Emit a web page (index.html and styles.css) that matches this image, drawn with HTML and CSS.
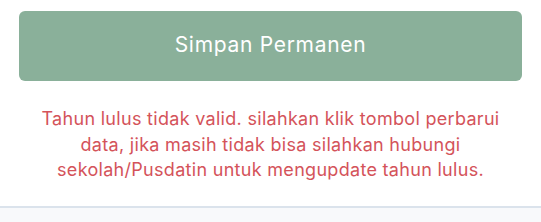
FILE: index.html
```html
<!DOCTYPE html>
<html lang="en">
<head>
    <meta charset="UTF-8">
    <meta name="viewport" content="width=device-width, initial-scale=1.0">
    <title>Simpan Permanen</title>
    <link rel="stylesheet" href="styles.css">
</head>
<body>
    <div class="panel">
        <button type="button" class="save-btn" disabled>Simpan Permanen</button>
        <p class="error-msg">
            Tahun lulus tidak valid. silahkan klik tombol perbarui<br>
            data, jika masih tidak bisa silahkan hubungi<br>
            sekolah/Pusdatin untuk mengupdate tahun lulus.
        </p>
    </div>
    <div class="footer"></div>
</body>
</html>
```

FILE: styles.css
```css
body {
    font-family: Inter, "Noto Sans", sans-serif;
    margin: 0;
    padding: 0;
    background-color: #ffffff;
}

.panel {
    padding: 11px 19px 0 19px;
    height: 206px;
    box-sizing: border-box;
}

.save-btn {
    display: block;
    width: 100%;
    height: 70px;
    padding: 0 0 4px 0;
    background-color: #8ab09a;
    color: #ffffff;
    border: none;
    border-radius: 6px;
    font-family: inherit;
    font-size: 21px;
    letter-spacing: 0.7px;
}

.error-msg {
    margin: 25px 0 0 0;
    text-align: center;
    color: #d4535a;
    font-size: 18px;
    line-height: 25.5px;
    letter-spacing: 0.3px;
}

.footer {
    border-top: 2px solid #dbe3ec;
    background-color: #f8f9fb;
    height: 14px;
}
```
